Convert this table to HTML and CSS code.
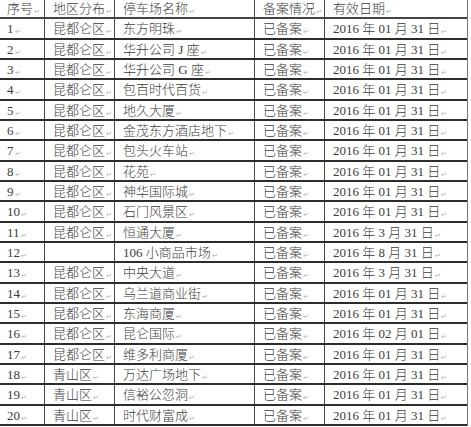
FILE: index.html
```html
<!DOCTYPE html>
<html lang="zh-CN">
<head>
<meta charset="utf-8">
<title>停车场备案</title>
<link rel="stylesheet" href="styles.css">
</head>
<body>
<div class="sheet">
  <div class="row head">
    <div class="cell">序号<i class="pm">↵</i></div>
    <div class="cell">地区分布<i class="pm">↵</i></div>
    <div class="cell">停车场名称<i class="pm">↵</i></div>
    <div class="cell">备案情况<i class="pm">↵</i></div>
    <div class="cell">有效日期<i class="pm">↵</i></div>
  </div>
  <div class="row"><div class="cell">1<i class="pm">↵</i></div><div class="cell">昆都仑区<i class="pm">↵</i></div><div class="cell">东方明珠<i class="pm">↵</i></div><div class="cell">已备案<i class="pm">↵</i></div><div class="cell">2016 年 01 月 31 日<i class="pm">↵</i></div></div>
  <div class="row"><div class="cell">2<i class="pm">↵</i></div><div class="cell">昆都仑区<i class="pm">↵</i></div><div class="cell">华升公司 J 座<i class="pm">↵</i></div><div class="cell">已备案<i class="pm">↵</i></div><div class="cell">2016 年 01 月 31 日<i class="pm">↵</i></div></div>
  <div class="row"><div class="cell">3<i class="pm">↵</i></div><div class="cell">昆都仑区<i class="pm">↵</i></div><div class="cell">华升公司 G 座<i class="pm">↵</i></div><div class="cell">已备案<i class="pm">↵</i></div><div class="cell">2016 年 01 月 31 日<i class="pm">↵</i></div></div>
  <div class="row"><div class="cell">4<i class="pm">↵</i></div><div class="cell">昆都仑区<i class="pm">↵</i></div><div class="cell">包百时代百货<i class="pm">↵</i></div><div class="cell">已备案<i class="pm">↵</i></div><div class="cell">2016 年 01 月 31 日<i class="pm">↵</i></div></div>
  <div class="row"><div class="cell">5<i class="pm">↵</i></div><div class="cell">昆都仑区<i class="pm">↵</i></div><div class="cell">地久大厦<i class="pm">↵</i></div><div class="cell">已备案<i class="pm">↵</i></div><div class="cell">2016 年 01 月 31 日<i class="pm">↵</i></div></div>
  <div class="row"><div class="cell">6<i class="pm">↵</i></div><div class="cell">昆都仑区<i class="pm">↵</i></div><div class="cell">金茂东方酒店地下<i class="pm">↵</i></div><div class="cell">已备案<i class="pm">↵</i></div><div class="cell">2016 年 01 月 31 日<i class="pm">↵</i></div></div>
  <div class="row"><div class="cell">7<i class="pm">↵</i></div><div class="cell">昆都仑区<i class="pm">↵</i></div><div class="cell">包头火车站<i class="pm">↵</i></div><div class="cell">已备案<i class="pm">↵</i></div><div class="cell">2016 年 01 月 31 日<i class="pm">↵</i></div></div>
  <div class="row"><div class="cell">8<i class="pm">↵</i></div><div class="cell">昆都仑区<i class="pm">↵</i></div><div class="cell">花苑<i class="pm">↵</i></div><div class="cell">已备案<i class="pm">↵</i></div><div class="cell">2016 年 01 月 31 日<i class="pm">↵</i></div></div>
  <div class="row"><div class="cell">9<i class="pm">↵</i></div><div class="cell">昆都仑区<i class="pm">↵</i></div><div class="cell">神华国际城<i class="pm">↵</i></div><div class="cell">已备案<i class="pm">↵</i></div><div class="cell">2016 年 01 月 31 日<i class="pm">↵</i></div></div>
  <div class="row"><div class="cell">10<i class="pm">↵</i></div><div class="cell">昆都仑区<i class="pm">↵</i></div><div class="cell">石门风景区<i class="pm">↵</i></div><div class="cell">已备案<i class="pm">↵</i></div><div class="cell">2016 年 01 月 31 日<i class="pm">↵</i></div></div>
  <div class="row"><div class="cell">11<i class="pm">↵</i></div><div class="cell">昆都仑区<i class="pm">↵</i></div><div class="cell">恒通大厦<i class="pm">↵</i></div><div class="cell">已备案<i class="pm">↵</i></div><div class="cell">2016 年 3 月 31 日<i class="pm">↵</i></div></div>
  <div class="row"><div class="cell">12<i class="pm">↵</i></div><div class="cell"></div><div class="cell">106 小商品市场<i class="pm">↵</i></div><div class="cell">已备案<i class="pm">↵</i></div><div class="cell">2016 年 8 月 31 日<i class="pm">↵</i></div></div>
  <div class="row"><div class="cell">13<i class="pm">↵</i></div><div class="cell">昆都仑区<i class="pm">↵</i></div><div class="cell">中央大道<i class="pm">↵</i></div><div class="cell">已备案<i class="pm">↵</i></div><div class="cell">2016 年 3 月 31 日<i class="pm">↵</i></div></div>
  <div class="row"><div class="cell">14<i class="pm">↵</i></div><div class="cell">昆都仑区<i class="pm">↵</i></div><div class="cell">乌兰道商业街<i class="pm">↵</i></div><div class="cell">已备案<i class="pm">↵</i></div><div class="cell">2016 年 01 月 31 日<i class="pm">↵</i></div></div>
  <div class="row"><div class="cell">15<i class="pm">↵</i></div><div class="cell">昆都仑区<i class="pm">↵</i></div><div class="cell">东海商厦<i class="pm">↵</i></div><div class="cell">已备案<i class="pm">↵</i></div><div class="cell">2016 年 01 月 31 日<i class="pm">↵</i></div></div>
  <div class="row"><div class="cell">16<i class="pm">↵</i></div><div class="cell">昆都仑区<i class="pm">↵</i></div><div class="cell">昆仑国际<i class="pm">↵</i></div><div class="cell">已备案<i class="pm">↵</i></div><div class="cell">2016 年 02 月 01 日<i class="pm">↵</i></div></div>
  <div class="row"><div class="cell">17<i class="pm">↵</i></div><div class="cell">昆都仑区<i class="pm">↵</i></div><div class="cell">维多利商厦<i class="pm">↵</i></div><div class="cell">已备案<i class="pm">↵</i></div><div class="cell">2016 年 01 月 31 日<i class="pm">↵</i></div></div>
  <div class="row"><div class="cell">18<i class="pm">↵</i></div><div class="cell">青山区<i class="pm">↵</i></div><div class="cell">万达广场地下<i class="pm">↵</i></div><div class="cell">已备案<i class="pm">↵</i></div><div class="cell">2016 年 01 月 31 日<i class="pm">↵</i></div></div>
  <div class="row"><div class="cell">19<i class="pm">↵</i></div><div class="cell">青山区<i class="pm">↵</i></div><div class="cell">信裕公忽洞<i class="pm">↵</i></div><div class="cell">已备案<i class="pm">↵</i></div><div class="cell">2016 年 01 月 31 日<i class="pm">↵</i></div></div>
  <div class="row"><div class="cell">20<i class="pm">↵</i></div><div class="cell">青山区<i class="pm">↵</i></div><div class="cell">时代财富成<i class="pm">↵</i></div><div class="cell">已备案<i class="pm">↵</i></div><div class="cell">2016 年 01 月 31 日<i class="pm">↵</i></div></div>
</div>
</body>
</html>
```

FILE: styles.css
```css
html, body {
  margin: 0;
  padding: 0;
  background: #ffffff;
}

body {
  font-family: "Liberation Serif", "Noto Sans CJK SC", serif;
  font-size: 13px;
  color: #3c3c3c;
}

.sheet {
  width: 468px;
  border-right: 1px solid #777;
  box-sizing: border-box;
}

.row {
  display: grid;
  grid-template-columns: 45px 70px 140px 70px 142px;
  height: 20.35px;
  border-bottom: 2px solid #2c2c2c;
  box-sizing: border-box;
}

.row.head {
  height: 19.3px;
  border-bottom-color: #444;
}

.cell {
  padding-left: 8px;
  padding-top: 1px;
  border-right: 1px solid #4a4a4a;
  white-space: nowrap;
  overflow: hidden;
  line-height: 18px;
  font-weight: 300;
}

.row.head .cell {
  padding-top: 0;
  line-height: 17px;
}

.cell:first-child {
  padding-left: 7px;
}

.cell:last-child {
  border-right: none;
}

.pm {
  font-style: normal;
  font-family: "DejaVu Sans", sans-serif;
  font-size: 7px;
  color: #b0b0b0;
  margin-left: 1px;
  position: relative;
  top: 1px;
}
```
